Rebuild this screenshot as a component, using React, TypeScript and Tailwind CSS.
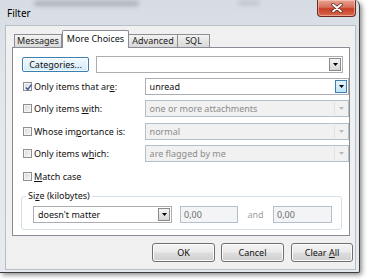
import React from "react";

/* ---------- small drawings ---------- */
function Arrow({ color }: { color: string }) {
  return (
    <svg width="5" height="3" viewBox="0 0 5 3">
      <path d="M0 0h5L2.5 3z" fill={color} />
    </svg>
  );
}

function Check() {
  return (
    <svg width="9" height="9" viewBox="0 0 9 9" className="absolute left-0 top-0">
      <path d="M1.8 4.6 3.7 6.6 7.4 1.6" stroke="#3a5597" strokeWidth="1.5" fill="none" />
    </svg>
  );
}

function CloseGlyph() {
  return (
    <svg width="12" height="10" viewBox="0 0 12 10">
      <path d="M2 1.5 10 8.5M10 1.5 2 8.5" stroke="#5a2a22" strokeWidth="3.4" strokeLinecap="round" />
      <path d="M2 1.5 10 8.5M10 1.5 2 8.5" stroke="#ffffff" strokeWidth="1.8" strokeLinecap="round" />
    </svg>
  );
}

/* ---------- controls ---------- */
type ComboKind = "normal" | "hot" | "disabled";

function Combo({ text, width, kind }: { text: string; width: string; kind: ComboKind }) {
  if (kind === "disabled") {
    return (
      <div className={`${width} h-[17px] flex items-center border border-[#b3bfcd] bg-[#f1f1f1]`}>
        <span className="flex-1 pl-[4px] text-[#8c8c8c] leading-none">{text}</span>
        <div className="w-[13px] h-[13px] mr-[1px] border-l border-[#dde2e8] flex items-center justify-center">
          <Arrow color="#b9b9b9" />
        </div>
      </div>
    );
  }
  return (
    <div className={`${width} h-[17px] flex items-center border border-[#abadb3] bg-white`}>
      <span className="flex-1 pl-[4px] leading-none">{text}</span>
      <div
        className={
          kind === "hot"
            ? "w-[12px] h-[13px] mr-[1px] flex items-center justify-center border border-[#3c7fb1] bg-[linear-gradient(#e3f4fc,#bfe5f9)]"
            : "w-[12px] h-[13px] mr-[1px] flex items-center justify-center border border-[#8a8a8a] bg-[linear-gradient(#f4f4f4,#d6d6d6)]"
        }
      >
        <Arrow color="#000000" />
      </div>
    </div>
  );
}

function CheckBox({ checked }: { checked?: boolean }) {
  return (
    <div className="relative w-[9px] h-[9px] border border-[#8f8f8f] bg-[linear-gradient(135deg,#d3d6da,#f8f8f8)] shadow-[inset_0_0_0_1px_#f4f4f4]">
      {checked && <Check />}
    </div>
  );
}

function PushButton({ width, children }: { width: string; children: React.ReactNode }) {
  return (
    <div
      className={`${width} h-[19px] flex items-center justify-center rounded-[3px] border border-[#707070] bg-[linear-gradient(#f3f3f3,#ebebeb_48%,#dddddd_52%,#cfcfcf)] shadow-[inset_0_0_0_1px_#fbfbfb]`}
    >
      {children}
    </div>
  );
}

/* ---------- rows ---------- */
const rows = [
  { pre: "Only items that ar", key: "e", post: ":", value: "unread", kind: "hot" as ComboKind, checked: true },
  { pre: "Only items ", key: "w", post: "ith:", value: "one or more attachments", kind: "disabled" as ComboKind },
  { pre: "Whose im", key: "p", post: "ortance is:", value: "normal", kind: "disabled" as ComboKind },
  { pre: "Only items w", key: "h", post: "ich:", value: "are flagged by me", kind: "disabled" as ComboKind },
];

const tabs = [
  { label: "Messages", width: "w-[48px]" },
  { label: "More Choices", width: "w-[67px]", active: true },
  { label: "Advanced", width: "w-[50px]" },
  { label: "SQL", width: "w-[33px]" },
];

export default function App() {
  return (
    <div className="w-[367px] h-[279px] bg-white overflow-hidden text-[9px] text-[#111] font-['Noto_Sans','DejaVu_Sans',sans-serif]">
      {/* Window frame */}
      <div className="relative w-[360px] h-[273px] rounded-tr-[6px] rounded-br-[2px] border-r border-b border-[#3c3c3c] bg-[linear-gradient(#d6dce3,#e2e7ec_30%,#e6eaee)] shadow-[2px_2px_5px_rgba(0,0,0,0.45)] overflow-hidden">
        {/* glass: blurred shapes of the window behind */}
        <div className="absolute left-[34px] top-[1px] w-[105px] h-[5px] rounded-full bg-[#8d939a] opacity-60 blur-[2px]" />
        <div className="absolute left-[238px] top-[1px] w-[22px] h-[4px] rounded-full bg-[#a3a9af] opacity-50 blur-[2px]" />

        {/* Title bar */}
        <div className="relative h-[25px] flex items-start justify-between">
          <div className="pl-[7px] pt-[7px] text-[10px] leading-[12px] text-black">Filter</div>
          <div className="mr-[3px] w-[39px] h-[17px] flex items-center justify-center rounded-b-[4px] border border-t-0 border-[#6b2a20] bg-[linear-gradient(#e8a493,#d7705a_45%,#c63f26_55%,#d9694c)] shadow-[inset_0_0_0_1px_rgba(255,220,210,0.5)]">
            <CloseGlyph />
          </div>
        </div>

        {/* Client area */}
        <div className="ml-[5px] w-[351px] h-[245px] border border-[#b7bec6] bg-[#f0f0f0]">
          {/* Tab strip */}
          <div className="pt-[4px] pl-[8px] h-[21px] flex items-end">
            {tabs.map((t) =>
              t.active ? (
                <div
                  key={t.label}
                  className={`${t.width} relative z-10 -mb-px h-[18px] pt-[2px] text-center bg-white border border-b-0 border-[#898c95] rounded-t-[2px] leading-[12px]`}
                >
                  {t.label}
                </div>
              ) : (
                <div
                  key={t.label}
                  className={`${t.width} h-[13px] text-center bg-[linear-gradient(#f3f3f3,#e4e4e4_50%,#d9d9d9)] border border-b-0 border-[#8c8e94] -ml-px first:ml-0 leading-[12px] text-[#222]`}
                >
                  {t.label}
                </div>
              )
            )}
          </div>

          {/* Tab panel */}
          <div className="ml-[6px] w-[338px] h-[189px] border border-[#898c95] bg-white">
            {/* Categories row */}
            <div className="mt-[8px] h-[17px] flex items-center">
              <div className="ml-[9px] w-[67px] h-[15px] flex items-center justify-center rounded-[2px] border border-[#3c7fb1] bg-[linear-gradient(#f2f9fd,#e3f2fb_50%,#d2ebfa)] shadow-[inset_0_0_0_1px_#f8fcff]">
                Categories...
              </div>
              <div className="ml-[7px]">
                <Combo text="" width="w-[247px]" kind="normal" />
              </div>
            </div>

            {/* Condition rows */}
            {rows.map((r, i) => (
              <div
                key={r.value}
                className={`${i === 2 ? "mt-[6px]" : "mt-[5px]"} h-[17px] flex items-center`}
              >
                <div className="ml-[10px]">
                  <CheckBox checked={r.checked} />
                </div>
                <div className="ml-[2px] w-[112px] whitespace-nowrap">
                  {r.pre}
                  <span className="underline underline-offset-1">{r.key}</span>
                  {r.post}
                </div>
                <Combo text={r.value} width="w-[207px]" kind={r.kind} />
              </div>
            ))}

            {/* Match case */}
            <div className="mt-[6px] h-[17px] flex items-center">
              <div className="ml-[10px]">
                <CheckBox />
              </div>
              <div className="ml-[2px]">
                <span className="underline underline-offset-1">M</span>atch case
              </div>
            </div>

            {/* Size group */}
            <div className="relative mt-[11px] ml-[8px] w-[321px] h-[34px] rounded-[3px] border border-[#d5dfe5]">
              <div className="absolute left-[4px] top-[-7px] px-[2px] bg-white leading-[12px]">
                Si<span className="underline underline-offset-1">z</span>e (kilobytes)
              </div>
              <div className="mt-[9px] ml-[11px] flex items-center">
                <Combo text="doesn't matter" width="w-[139px]" kind="normal" />
                <div className="ml-[8px] w-[58px] h-[17px] flex items-center pl-[3px] border border-[#b3bfcd] bg-[#f3f4f6] text-[#6e6e6e]">
                  0,00
                </div>
                <div className="w-[35px] text-center text-[#a0a0a0]">and</div>
                <div className="w-[59px] h-[17px] flex items-center pl-[3px] border border-[#b3bfcd] bg-[#f3f4f6] text-[#6e6e6e]">
                  0,00
                </div>
              </div>
            </div>
          </div>

          {/* Dialog buttons */}
          <div className="mt-[7px] ml-[146px] flex gap-[6px]">
            <PushButton width="w-[63px]">OK</PushButton>
            <PushButton width="w-[63px]">Cancel</PushButton>
            <div className="ml-[1px]">
              <PushButton width="w-[62px]">
                <span>
                  Clear <span className="underline underline-offset-1">A</span>ll
                </span>
              </PushButton>
            </div>
          </div>
        </div>
      </div>
    </div>
  );
}
